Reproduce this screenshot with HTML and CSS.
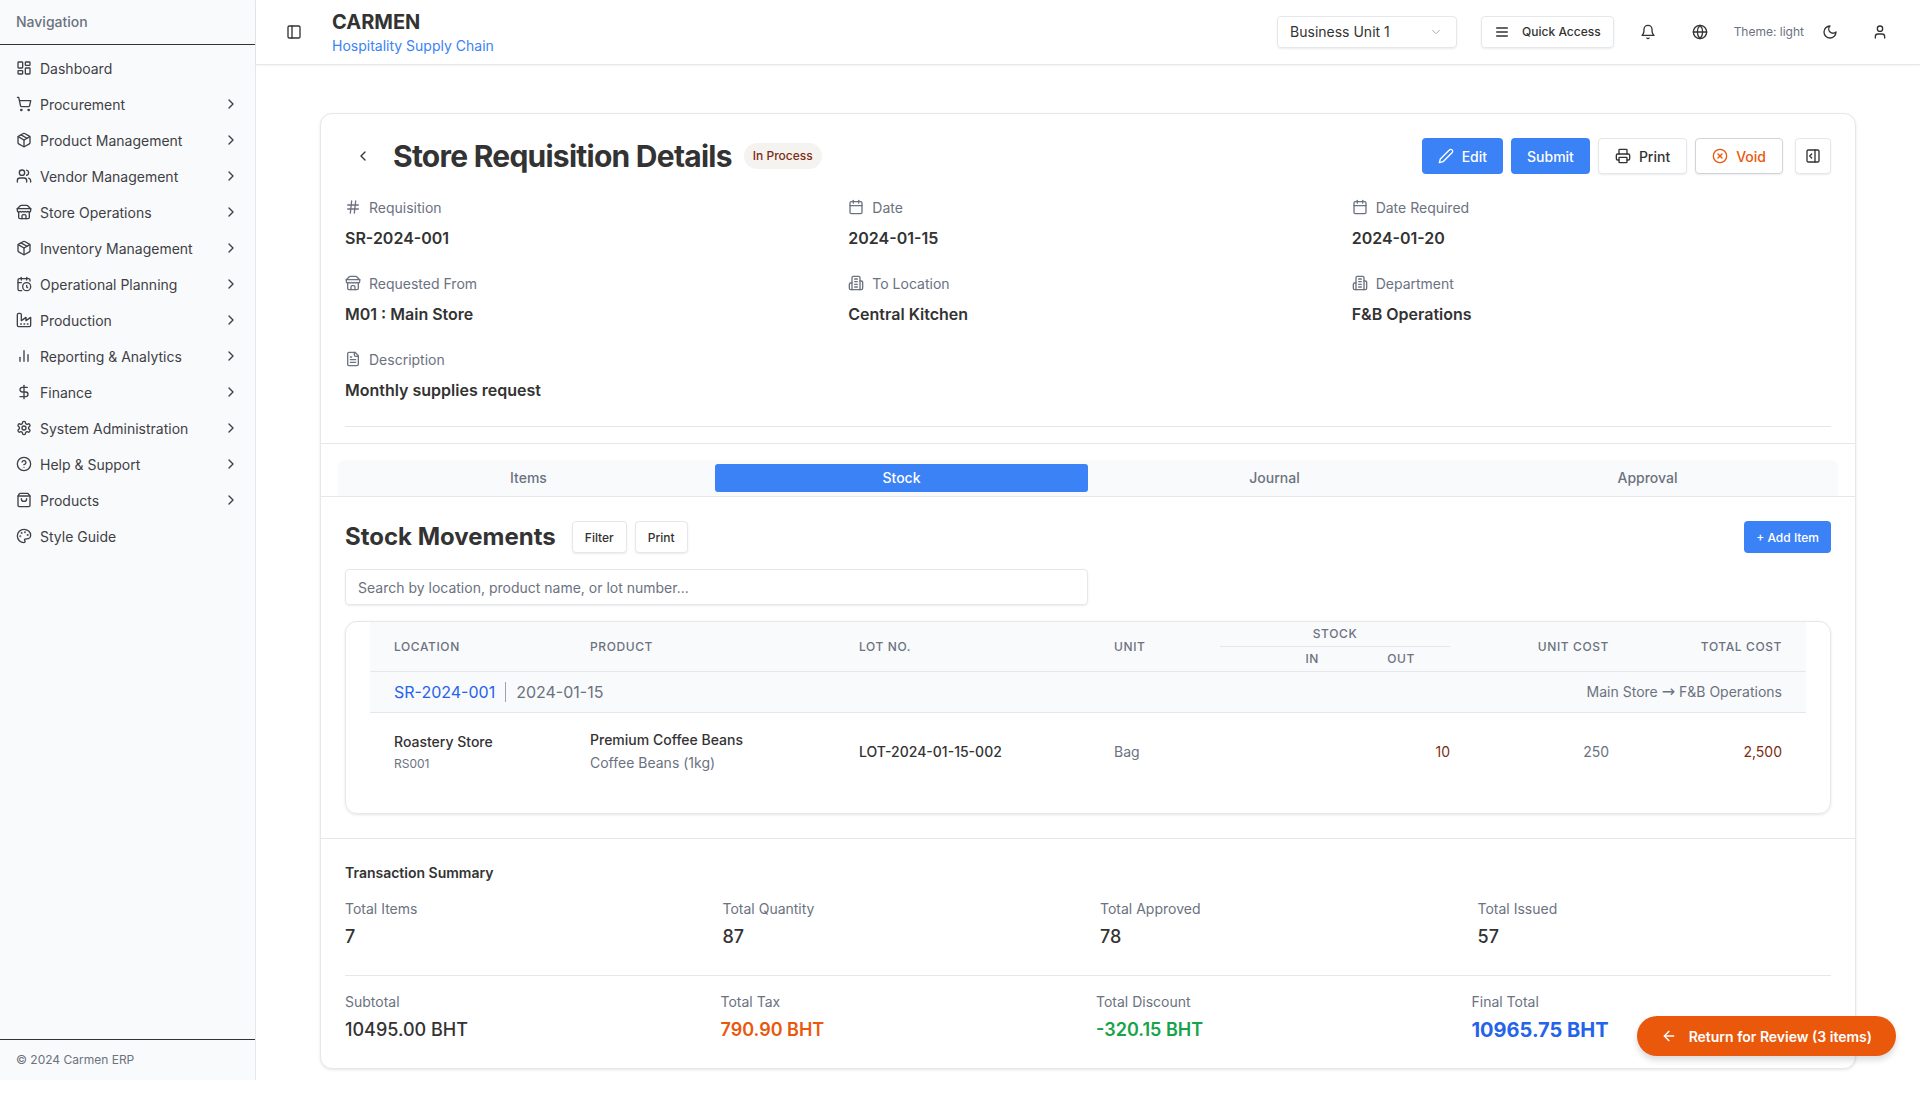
FILE: index.html
```html
<!DOCTYPE html>
<html lang="en">
<head>
    <meta charset="UTF-8">
    <title>Store Requisition Details</title>
    <link rel="stylesheet" href="styles.css">
</head>
<body>
    <svg class="sprite" xmlns="http://www.w3.org/2000/svg">
        <symbol id="i-chev" viewBox="0 0 24 24"><path d="m9 18 6-6-6-6"/></symbol>
        <symbol id="i-dash" viewBox="0 0 24 24"><rect width="7" height="9" x="3" y="3" rx="1"/><rect width="7" height="5" x="14" y="3" rx="1"/><rect width="7" height="9" x="14" y="12" rx="1"/><rect width="7" height="5" x="3" y="16" rx="1"/></symbol>
        <symbol id="i-cart" viewBox="0 0 24 24"><circle cx="8" cy="21" r="1"/><circle cx="19" cy="21" r="1"/><path d="M2.05 2.05h2l2.66 12.42a2 2 0 0 0 2 1.58h9.78a2 2 0 0 0 1.95-1.57l1.65-7.43H5.12"/></symbol>
        <symbol id="i-box" viewBox="0 0 24 24"><path d="m7.5 4.27 9 5.15"/><path d="M21 8a2 2 0 0 0-1-1.73l-7-4a2 2 0 0 0-2 0l-7 4A2 2 0 0 0 3 8v8a2 2 0 0 0 1 1.73l7 4a2 2 0 0 0 2 0l7-4A2 2 0 0 0 21 16Z"/><path d="m3.3 7 8.7 5 8.7-5"/><path d="M12 22V12"/></symbol>
        <symbol id="i-users" viewBox="0 0 24 24"><path d="M16 21v-2a4 4 0 0 0-4-4H6a4 4 0 0 0-4 4v2"/><circle cx="9" cy="7" r="4"/><path d="M22 21v-2a4 4 0 0 0-3-3.87"/><path d="M16 3.13a4 4 0 0 1 0 7.75"/></symbol>
        <symbol id="i-store" viewBox="0 0 24 24"><path d="m2 7 4.41-4.41A2 2 0 0 1 7.83 2h8.34a2 2 0 0 1 1.42.59L22 7"/><path d="M4 12v8a2 2 0 0 0 2 2h12a2 2 0 0 0 2-2v-8"/><path d="M15 22v-4a2 2 0 0 0-2-2h-2a2 2 0 0 0-2 2v4"/><path d="M2 7h20"/><path d="M22 7v3a2 2 0 0 1-2 2a2.7 2.7 0 0 1-1.59-.63.7.7 0 0 0-.82 0A2.7 2.7 0 0 1 16 12a2.7 2.7 0 0 1-1.59-.63.7.7 0 0 0-.82 0A2.7 2.7 0 0 1 12 12a2.7 2.7 0 0 1-1.59-.63.7.7 0 0 0-.82 0A2.7 2.7 0 0 1 8 12a2.7 2.7 0 0 1-1.59-.63.7.7 0 0 0-.82 0A2.7 2.7 0 0 1 4 12a2 2 0 0 1-2-2V7"/></symbol>
        <symbol id="i-calclock" viewBox="0 0 24 24"><path d="M21 7.5V6a2 2 0 0 0-2-2H5a2 2 0 0 0-2 2v14a2 2 0 0 0 2 2h3.5"/><path d="M16 2v4"/><path d="M8 2v4"/><path d="M3 10h5"/><path d="M17.5 17.5 16 16.3V14"/><circle cx="16" cy="16" r="6"/></symbol>
        <symbol id="i-factory" viewBox="0 0 24 24"><path d="M2 20a2 2 0 0 0 2 2h16a2 2 0 0 0 2-2V8l-7 5V8l-7 5V4a2 2 0 0 0-2-2H4a2 2 0 0 0-2 2Z"/><path d="M17 18h1"/><path d="M12 18h1"/><path d="M7 18h1"/></symbol>
        <symbol id="i-bars" viewBox="0 0 24 24"><line x1="18" x2="18" y1="20" y2="10"/><line x1="12" x2="12" y1="20" y2="4"/><line x1="6" x2="6" y1="20" y2="14"/></symbol>
        <symbol id="i-dollar" viewBox="0 0 24 24"><line x1="12" x2="12" y1="2" y2="22"/><path d="M17 5H9.5a3.5 3.5 0 0 0 0 7h5a3.5 3.5 0 0 1 0 7H6"/></symbol>
        <symbol id="i-gear" viewBox="0 0 24 24"><path d="M12.22 2h-.44a2 2 0 0 0-2 2v.18a2 2 0 0 1-1 1.73l-.43.25a2 2 0 0 1-2 0l-.15-.08a2 2 0 0 0-2.73.73l-.22.38a2 2 0 0 0 .73 2.73l.15.1a2 2 0 0 1 1 1.72v.51a2 2 0 0 1-1 1.74l-.15.09a2 2 0 0 0-.73 2.73l.22.38a2 2 0 0 0 2.73.73l.15-.08a2 2 0 0 1 2 0l.43.25a2 2 0 0 1 1 1.73V20a2 2 0 0 0 2 2h.44a2 2 0 0 0 2-2v-.18a2 2 0 0 1 1-1.73l.43-.25a2 2 0 0 1 2 0l.15.08a2 2 0 0 0 2.73-.73l.22-.39a2 2 0 0 0-.73-2.73l-.15-.08a2 2 0 0 1-1-1.74v-.5a2 2 0 0 1 1-1.74l.15-.09a2 2 0 0 0 .73-2.73l-.22-.38a2 2 0 0 0-2.73-.73l-.15.08a2 2 0 0 1-2 0l-.43-.25a2 2 0 0 1-1-1.73V4a2 2 0 0 0-2-2z"/><circle cx="12" cy="12" r="3"/></symbol>
        <symbol id="i-help" viewBox="0 0 24 24"><circle cx="12" cy="12" r="10"/><path d="M9.09 9a3 3 0 0 1 5.83 1c0 2-3 3-3 3"/><path d="M12 17h.01"/></symbol>
        <symbol id="i-bag" viewBox="0 0 24 24"><path d="M16 10a4 4 0 0 1-8 0"/><path d="M3.103 6.034h17.794"/><path d="M3.4 5.467a2 2 0 0 0-.4 1.2V20a2 2 0 0 0 2 2h14a2 2 0 0 0 2-2V6.667a2 2 0 0 0-.4-1.2l-1.5-2A2 2 0 0 0 17.5 2h-11a2 2 0 0 0-1.6.8z"/></symbol>
        <symbol id="i-palette" viewBox="0 0 24 24"><circle cx="13.5" cy="6.5" r=".5"/><circle cx="17.5" cy="10.5" r=".5"/><circle cx="8.5" cy="7.5" r=".5"/><circle cx="6.5" cy="12.5" r=".5"/><path d="M12 2C6.5 2 2 6.5 2 12s4.5 10 10 10c.926 0 1.648-.746 1.648-1.688 0-.437-.18-.835-.437-1.125-.29-.289-.438-.652-.438-1.125a1.64 1.64 0 0 1 1.668-1.668h1.996c3.051 0 5.555-2.503 5.555-5.554C21.965 6.012 17.461 2 12 2z"/></symbol>
        <symbol id="i-panel" viewBox="0 0 24 24"><rect width="18" height="18" x="3" y="3" rx="2"/><path d="M9 3v18"/></symbol>
        <symbol id="i-panelr" viewBox="0 0 24 24"><rect width="18" height="18" x="3" y="3" rx="2"/><path d="M15 3v18"/><path d="m10 15-3-3 3-3"/></symbol>
        <symbol id="i-chevd" viewBox="0 0 24 24"><path d="m6 9 6 6 6-6"/></symbol>
        <symbol id="i-back" viewBox="0 0 24 24"><path d="m15 18-6-6 6-6"/></symbol>
        <symbol id="i-menu" viewBox="0 0 24 24"><path d="M4 6h16"/><path d="M4 12h16"/><path d="M4 18h16"/></symbol>
        <symbol id="i-bell" viewBox="0 0 24 24"><path d="M6 8a6 6 0 0 1 12 0c0 7 3 9 3 9H3s3-2 3-9"/><path d="M10.3 21a1.94 1.94 0 0 0 3.4 0"/></symbol>
        <symbol id="i-globe" viewBox="0 0 24 24"><circle cx="12" cy="12" r="10"/><path d="M12 2a14.5 14.5 0 0 0 0 20 14.5 14.5 0 0 0 0-20"/><path d="M2 12h20"/></symbol>
        <symbol id="i-moon" viewBox="0 0 24 24"><path d="M12 3a6 6 0 0 0 9 9 9 9 0 1 1-9-9Z"/></symbol>
        <symbol id="i-user" viewBox="0 0 24 24"><path d="M19 21v-2a4 4 0 0 0-4-4H9a4 4 0 0 0-4 4v2"/><circle cx="12" cy="7" r="4"/></symbol>
        <symbol id="i-pen" viewBox="0 0 24 24"><path d="M17 3a2.85 2.83 0 1 1 4 4L7.5 20.5 2 22l1.5-5.5Z"/></symbol>
        <symbol id="i-print" viewBox="0 0 24 24"><path d="M6 18H4a2 2 0 0 1-2-2v-5a2 2 0 0 1 2-2h16a2 2 0 0 1 2 2v5a2 2 0 0 1-2 2h-2"/><path d="M6 9V3a1 1 0 0 1 1-1h10a1 1 0 0 1 1 1v6"/><rect x="6" y="14" width="12" height="8" rx="1"/></symbol>
        <symbol id="i-xcircle" viewBox="0 0 24 24"><circle cx="12" cy="12" r="10"/><path d="m15 9-6 6"/><path d="m9 9 6 6"/></symbol>
        <symbol id="i-hash" viewBox="0 0 24 24"><line x1="4" x2="20" y1="9" y2="9"/><line x1="4" x2="20" y1="15" y2="15"/><line x1="10" x2="8" y1="3" y2="21"/><line x1="16" x2="14" y1="3" y2="21"/></symbol>
        <symbol id="i-cal" viewBox="0 0 24 24"><path d="M8 2v4"/><path d="M16 2v4"/><rect width="18" height="18" x="3" y="4" rx="2"/><path d="M3 10h18"/></symbol>
        <symbol id="i-building" viewBox="0 0 24 24"><path d="M6 22V4a2 2 0 0 1 2-2h8a2 2 0 0 1 2 2v18Z"/><path d="M6 12H4a2 2 0 0 0-2 2v6a2 2 0 0 0 2 2h2"/><path d="M18 9h2a2 2 0 0 1 2 2v9a2 2 0 0 1-2 2h-2"/><path d="M10 6h4"/><path d="M10 10h4"/><path d="M10 14h4"/><path d="M10 18h4"/></symbol>
        <symbol id="i-file" viewBox="0 0 24 24"><path d="M15 2H6a2 2 0 0 0-2 2v16a2 2 0 0 0 2 2h12a2 2 0 0 0 2-2V7Z"/><path d="M14 2v4a2 2 0 0 0 2 2h4"/><path d="M10 9H8"/><path d="M16 13H8"/><path d="M16 17H8"/></symbol>
        <symbol id="i-arrow" viewBox="0 0 24 24"><path d="m12 19-7-7 7-7"/><path d="M19 12H5"/></symbol>
    </svg>

    <div class="app">
        <aside class="sidebar">
            <div class="sidebar-title">Navigation</div>
            <nav class="nav">
                <a class="nav-item"><svg class="icon"><use href="#i-dash"/></svg><span>Dashboard</span></a>
                <a class="nav-item"><svg class="icon"><use href="#i-cart"/></svg><span>Procurement</span><svg class="icon chev"><use href="#i-chev"/></svg></a>
                <a class="nav-item"><svg class="icon"><use href="#i-box"/></svg><span>Product Management</span><svg class="icon chev"><use href="#i-chev"/></svg></a>
                <a class="nav-item"><svg class="icon"><use href="#i-users"/></svg><span>Vendor Management</span><svg class="icon chev"><use href="#i-chev"/></svg></a>
                <a class="nav-item"><svg class="icon"><use href="#i-store"/></svg><span>Store Operations</span><svg class="icon chev"><use href="#i-chev"/></svg></a>
                <a class="nav-item"><svg class="icon"><use href="#i-box"/></svg><span>Inventory Management</span><svg class="icon chev"><use href="#i-chev"/></svg></a>
                <a class="nav-item"><svg class="icon"><use href="#i-calclock"/></svg><span>Operational Planning</span><svg class="icon chev"><use href="#i-chev"/></svg></a>
                <a class="nav-item"><svg class="icon"><use href="#i-factory"/></svg><span>Production</span><svg class="icon chev"><use href="#i-chev"/></svg></a>
                <a class="nav-item"><svg class="icon"><use href="#i-bars"/></svg><span>Reporting &amp; Analytics</span><svg class="icon chev"><use href="#i-chev"/></svg></a>
                <a class="nav-item"><svg class="icon"><use href="#i-dollar"/></svg><span>Finance</span><svg class="icon chev"><use href="#i-chev"/></svg></a>
                <a class="nav-item"><svg class="icon"><use href="#i-gear"/></svg><span>System Administration</span><svg class="icon chev"><use href="#i-chev"/></svg></a>
                <a class="nav-item"><svg class="icon"><use href="#i-help"/></svg><span>Help &amp; Support</span><svg class="icon chev"><use href="#i-chev"/></svg></a>
                <a class="nav-item"><svg class="icon"><use href="#i-bag"/></svg><span>Products</span><svg class="icon chev"><use href="#i-chev"/></svg></a>
                <a class="nav-item"><svg class="icon"><use href="#i-palette"/></svg><span>Style Guide</span></a>
            </nav>
            <div class="sidebar-footer">© 2024 Carmen ERP</div>
        </aside>

        <div class="content">
            <header class="topbar">
                <svg class="icon toggle"><use href="#i-panel"/></svg>
                <div class="brand">
                    <div class="brand-name">CARMEN</div>
                    <div class="brand-sub">Hospitality Supply Chain</div>
                </div>
                <div class="topbar-right">
                    <div class="select">Business Unit 1<svg class="icon select-chev"><use href="#i-chevd"/></svg></div>
                    <div class="quick"><svg class="icon"><use href="#i-menu"/></svg>Quick Access</div>
                    <svg class="icon bell"><use href="#i-bell"/></svg>
                    <svg class="icon globe"><use href="#i-globe"/></svg>
                    <span class="theme">Theme: light</span>
                    <svg class="icon moon"><use href="#i-moon"/></svg>
                    <svg class="icon person"><use href="#i-user"/></svg>
                </div>
            </header>

            <main class="main">
                <section class="card">
                    <div class="detail-head">
                        <div class="title-row">
                            <svg class="icon back"><use href="#i-back"/></svg>
                            <h1 class="page-title">Store Requisition Details</h1>
                            <span class="badge">In Process</span>
                            <div class="actions">
                                <button class="btn btn-primary"><svg class="icon"><use href="#i-pen"/></svg>Edit</button>
                                <button class="btn btn-primary">Submit</button>
                                <button class="btn btn-outline"><svg class="icon"><use href="#i-print"/></svg>Print</button>
                                <button class="btn btn-outline btn-void"><svg class="icon"><use href="#i-xcircle"/></svg>Void</button>
                                <button class="btn btn-outline btn-icon"><svg class="icon"><use href="#i-panelr"/></svg></button>
                            </div>
                        </div>
                        <div class="fields">
                            <div class="field"><div class="field-label"><svg class="icon"><use href="#i-hash"/></svg>Requisition</div><div class="field-value">SR-2024-001</div></div>
                            <div class="field"><div class="field-label"><svg class="icon"><use href="#i-cal"/></svg>Date</div><div class="field-value">2024-01-15</div></div>
                            <div class="field"><div class="field-label"><svg class="icon"><use href="#i-cal"/></svg>Date Required</div><div class="field-value">2024-01-20</div></div>
                            <div class="field"><div class="field-label"><svg class="icon"><use href="#i-store"/></svg>Requested From</div><div class="field-value">M01 : Main Store</div></div>
                            <div class="field"><div class="field-label"><svg class="icon"><use href="#i-building"/></svg>To Location</div><div class="field-value">Central Kitchen</div></div>
                            <div class="field"><div class="field-label"><svg class="icon"><use href="#i-building"/></svg>Department</div><div class="field-value">F&amp;B Operations</div></div>
                            <div class="field"><div class="field-label"><svg class="icon"><use href="#i-file"/></svg>Description</div><div class="field-value">Monthly supplies request</div></div>
                        </div>
                        <div class="head-rule"></div>
                    </div>

                    <div class="tabs-wrap">
                        <div class="tabs">
                            <div class="tab">Items</div>
                            <div class="tab active">Stock</div>
                            <div class="tab">Journal</div>
                            <div class="tab">Approval</div>
                        </div>
                    </div>

                    <div class="stock">
                        <div class="stock-head">
                            <h2 class="stock-title">Stock Movements</h2>
                            <button class="btn-sm">Filter</button>
                            <button class="btn-sm">Print</button>
                            <button class="btn-sm btn-add">+ Add Item</button>
                        </div>
                        <div class="search">Search by location, product name, or lot number...</div>
                        <div class="table-card">
                            <table class="stock-table">
                                <colgroup>
                                    <col class="c-loc"><col class="c-prod"><col class="c-lot"><col class="c-unit"><col class="c-in"><col class="c-out"><col class="c-ucost"><col class="c-tcost">
                                </colgroup>
                                <thead>
                                    <tr>
                                        <th rowspan="2">Location</th>
                                        <th rowspan="2">Product</th>
                                        <th rowspan="2">Lot No.</th>
                                        <th rowspan="2">Unit</th>
                                        <th colspan="2" class="th-stock"><span>Stock</span></th>
                                        <th rowspan="2" class="num">Unit Cost</th>
                                        <th rowspan="2" class="num">Total Cost</th>
                                    </tr>
                                    <tr>
                                        <th class="th-in">In</th>
                                        <th class="th-out">Out</th>
                                    </tr>
                                </thead>
                                <tbody>
                                    <tr class="group-row">
                                        <td colspan="8">
                                            <div class="group">
                                                <a class="group-ref">SR-2024-001</a>
                                                <span class="group-sep"></span>
                                                <span class="group-date">2024-01-15</span>
                                                <span class="group-route">Main Store <span class="route-arrow">→</span> F&amp;B Operations</span>
                                            </div>
                                        </td>
                                    </tr>
                                    <tr class="item-row">
                                        <td><div class="strong">Roastery Store</div><div class="small">RS001</div></td>
                                        <td><div class="strong">Premium Coffee Beans</div><div class="muted sub">Coffee Beans (1kg)</div></td>
                                        <td class="strong">LOT-2024-01-15-002</td>
                                        <td class="muted">Bag</td>
                                        <td></td>
                                        <td class="qty out">10</td>
                                        <td class="num muted">250</td>
                                        <td class="num out">2,500</td>
                                    </tr>
                                </tbody>
                            </table>
                        </div>
                    </div>

                    <div class="summary">
                        <h3 class="summary-title">Transaction Summary</h3>
                        <div class="sum-row">
                            <div><div class="sum-label">Total Items</div><div class="sum-value">7</div></div>
                            <div><div class="sum-label">Total Quantity</div><div class="sum-value">87</div></div>
                            <div><div class="sum-label">Total Approved</div><div class="sum-value">78</div></div>
                            <div><div class="sum-label">Total Issued</div><div class="sum-value">57</div></div>
                        </div>
                        <div class="sum-row totals">
                            <div><div class="sum-label">Subtotal</div><div class="sum-value">10495.00 BHT</div></div>
                            <div><div class="sum-label">Total Tax</div><div class="sum-value tax">790.90 BHT</div></div>
                            <div><div class="sum-label">Total Discount</div><div class="sum-value discount">-320.15 BHT</div></div>
                            <div><div class="sum-label">Final Total</div><div class="sum-value final">10965.75 BHT</div></div>
                        </div>
                    </div>
                </section>
            </main>
        </div>

        <button class="return-btn"><svg class="icon"><use href="#i-arrow"/></svg>Return for Review (3 items)</button>
    </div>
</body>
</html>
```

FILE: styles.css
```css
* {
    margin: 0;
    padding: 0;
    box-sizing: border-box;
}

body {
    font-family: Inter, "Noto Sans", sans-serif;
    font-size: 14px;
    color: #333;
    background: #fff;
}

.sprite {
    display: none;
}

.icon {
    width: 16px;
    height: 16px;
    flex: none;
    fill: none;
    stroke: currentColor;
    stroke-width: 2;
    stroke-linecap: round;
    stroke-linejoin: round;
}

.app {
    position: relative;
    display: flex;
    height: 1080px;
    overflow: hidden;
}

/* sidebar */
.sidebar {
    width: 256px;
    flex: none;
    display: flex;
    flex-direction: column;
    background: #f9fafb;
    border-right: 1px solid #e5e7eb;
}

.sidebar-title {
    height: 45px;
    padding: 13px 16px 0;
    font-weight: 500;
    line-height: 17px;
    color: #6b7280;
    border-bottom: 1px solid #333;
}

.nav {
    flex: 1;
    padding-top: 5px;
}

.nav-item {
    display: flex;
    align-items: center;
    gap: 8px;
    height: 36px;
    padding: 0 16px;
    color: #3f3f46;
}

.nav-item span {
    flex: 1;
}

.sidebar-footer {
    height: 41px;
    padding: 12px 16px 0;
    font-size: 12px;
    color: #6b7280;
    border-top: 1px solid #333;
}

/* top bar */
.content {
    flex: 1;
    min-width: 0;
}

.topbar {
    display: flex;
    align-items: center;
    height: 65px;
    padding: 0 32px 1px 30px;
    border-bottom: 1px solid #e5e7eb;
    box-shadow: 0 1px 2px rgba(0, 0, 0, 0.05);
}

.toggle {
    margin-right: 30px;
}

.brand-name {
    font-size: 20px;
    font-weight: 700;
    line-height: 28px;
}

.brand-sub {
    font-size: 14px;
    line-height: 20px;
    color: #3b82f6;
}

.topbar-right {
    display: flex;
    align-items: center;
    margin-left: auto;
}

.select {
    display: flex;
    align-items: center;
    justify-content: space-between;
    width: 180px;
    height: 32px;
    padding: 0 13px 0 12px;
    font-size: 14px;
    border: 1px solid #e5e7eb;
    border-radius: 4px;
    box-shadow: 0 1px 2px rgba(0, 0, 0, 0.08);
}

.select-chev {
    width: 14px;
    height: 14px;
    color: #9ca3af;
    stroke-width: 1.5;
}

.quick {
    display: flex;
    align-items: center;
    gap: 12px;
    height: 32px;
    margin-left: 24px;
    padding: 0 12px;
    font-size: 12px;
    font-weight: 500;
    border: 1px solid #e5e7eb;
    border-radius: 4px;
    box-shadow: 0 1px 2px rgba(0, 0, 0, 0.08);
}

.bell {
    margin-left: 26px;
}

.globe {
    margin-left: 36px;
}

.theme {
    margin-left: 26px;
    font-size: 12px;
    color: #6b7280;
}

.moon {
    margin-left: 18px;
}

.person {
    margin-left: 34px;
}

/* card */
.main {
    padding: 48px 64px 0;
}

.card {
    border: 1px solid #e5e7eb;
    border-radius: 12px;
    box-shadow: 0 1px 3px rgba(0, 0, 0, 0.1);
    background: #fff;
}

.detail-head {
    padding: 24px 24px 16px;
}

.title-row {
    display: flex;
    align-items: center;
    height: 36px;
}

.back {
    margin-left: 10px;
    margin-right: 22px;
}

.page-title {
    font-size: 30px;
    font-weight: 700;
    line-height: 36px;
    letter-spacing: -0.75px;
}

.badge {
    margin-left: 12px;
    padding: 0 9px;
    font-size: 12px;
    font-weight: 500;
    line-height: 26px;
    color: #7c2d12;
    background: #f5f3f0;
    border-radius: 13px;
}

.actions {
    display: flex;
    gap: 8px;
    margin-left: auto;
}

.btn {
    display: flex;
    align-items: center;
    justify-content: center;
    gap: 8px;
    height: 36px;
    font-family: inherit;
    font-size: 14px;
    font-weight: 500;
    border-radius: 4px;
    cursor: pointer;
}

.btn-primary {
    padding: 0 16px;
    color: #fff;
    background: #3b82f6;
    border: none;
}

.btn-outline {
    padding: 0 16px;
    color: #333;
    background: #fff;
    border: 1px solid #e5e7eb;
    box-shadow: 0 1px 2px rgba(0, 0, 0, 0.08);
}

.btn-void {
    color: #ea580c;
    border-color: #d1d5db;
}

.btn-icon {
    width: 36px;
    padding: 0;
    margin-left: 4px;
}

.fields {
    display: grid;
    grid-template-columns: repeat(3, 1fr);
    column-gap: 24px;
    row-gap: 23px;
    margin-top: 23px;
}

.field-label {
    display: flex;
    align-items: center;
    gap: 8px;
    height: 20px;
    color: #6b7280;
}

.field-value {
    margin-top: 9px;
    font-size: 16px;
    font-weight: 600;
    line-height: 24px;
}

.head-rule {
    margin-top: 24px;
    border-top: 1px solid #e5e7eb;
}

/* tabs */
.tabs-wrap {
    padding: 16px 17px 0;
    border-top: 1px solid #e5e7eb;
    border-bottom: 1px solid #e5e7eb;
}

.tabs {
    display: grid;
    grid-template-columns: repeat(4, 1fr);
    height: 36px;
    padding: 4px;
    background: #f9fafb;
    border-radius: 6px 6px 0 0;
}

.tab {
    display: flex;
    align-items: center;
    justify-content: center;
    padding-bottom: 1px;
    font-weight: 500;
    color: #6b7280;
    border-radius: 3px;
}

.tab.active {
    color: #fff;
    background: #3b82f6;
}

/* stock */
.stock {
    padding: 24px;
    border-bottom: 1px solid #e5e7eb;
}

.stock-head {
    display: flex;
    align-items: center;
    gap: 8px;
    height: 32px;
}

.stock-title {
    margin-right: 8px;
    font-size: 24px;
    font-weight: 700;
    line-height: 32px;
}

.btn-sm {
    height: 32px;
    padding: 0 12px;
    font-family: inherit;
    font-size: 12px;
    font-weight: 500;
    color: #333;
    background: #fff;
    border: 1px solid #e5e7eb;
    border-radius: 4px;
    box-shadow: 0 1px 2px rgba(0, 0, 0, 0.08);
}

.btn-add {
    margin-left: auto;
    color: #fff;
    background: #3b82f6;
    border: none;
    box-shadow: none;
}

.search {
    width: 743px;
    height: 36px;
    margin-top: 16px;
    padding: 0 12px;
    line-height: 35px;
    color: #6b7280;
    border: 1px solid #e5e7eb;
    border-radius: 4px;
    box-shadow: 0 1px 2px rgba(0, 0, 0, 0.08);
}

.table-card {
    height: 193px;
    margin-top: 16px;
    padding: 0 24px;
    border: 1px solid #e5e7eb;
    border-radius: 12px;
    box-shadow: 0 1px 3px rgba(0, 0, 0, 0.1);
}

.stock-table {
    width: 100%;
    table-layout: fixed;
    border-collapse: collapse;
}

.c-loc { width: 196px; }
.c-prod { width: 269px; }
.c-lot { width: 255px; }
.c-unit { width: 130px; }
.c-in { width: 114px; }
.c-out { width: 116px; }
.c-ucost { width: 183px; }
.c-tcost { width: 173px; }

.stock-table th {
    padding: 0 24px;
    font-size: 12px;
    font-weight: 500;
    letter-spacing: 0.6px;
    text-align: left;
    text-transform: uppercase;
    color: #6b7280;
    background: #f9fafb;
}

.stock-table thead tr:first-child th {
    height: 24px;
}

.stock-table thead tr:last-child th {
    height: 25px;
    border-bottom: 1px solid #e5e7eb;
}

.stock-table th[rowspan] {
    border-bottom: 1px solid #e5e7eb;
}

.stock-table .th-stock {
    padding: 0;
    text-align: center;
    border-bottom: 1px solid #e5e7eb;
}

.stock-table .th-in {
    padding: 0 15px 0 0;
    text-align: right;
}

.stock-table .th-out {
    padding: 0 35px 0 0;
    text-align: right;
}

.stock-table .num {
    text-align: right;
}

.group-row td {
    height: 41px;
    padding: 0 24px;
    background: #f9fafb;
    border-bottom: 1px solid #e5e7eb;
}

.group {
    display: flex;
    align-items: center;
}

.group-ref {
    font-size: 16px;
    color: #2563eb;
}

.group-sep {
    width: 1px;
    height: 20px;
    margin: 0 10px;
    background: #9ca3af;
}

.group-date {
    font-size: 16px;
    color: #6b7280;
}

.group-route {
    margin-left: auto;
    color: #6b7280;
}

.route-arrow {
    font-family: "DejaVu Sans", sans-serif;
    font-size: 16px;
    line-height: 16px;
}

.item-row td {
    height: 79px;
    padding: 0 24px;
}

.item-row .qty {
    padding-right: 0;
    text-align: right;
}

.strong {
    font-weight: 500;
    line-height: 20px;
}

.small {
    margin-top: 4px;
    font-size: 12px;
    line-height: 16px;
    color: #6b7280;
}

.muted {
    color: #6b7280;
}

.sub {
    margin-top: 3px;
    line-height: 20px;
}

.out {
    color: #7c2d12;
}

/* summary */
.summary {
    padding: 24px;
}

.summary-title {
    font-size: 14px;
    font-weight: 600;
    line-height: 20px;
}

.sum-row {
    display: grid;
    grid-template-columns: repeat(4, 1fr);
    column-gap: 24px;
    margin-top: 16px;
}

.sum-row.totals {
    column-gap: 16px;
    margin-top: 24px;
    padding-top: 16px;
    border-top: 1px solid #e5e7eb;
}

.sum-label {
    line-height: 20px;
    color: #6b7280;
}

.sum-value {
    margin-top: 4px;
    font-size: 18px;
    font-weight: 500;
    line-height: 28px;
}

.tax {
    font-weight: 600;
    color: #ea580c;
}

.discount {
    font-weight: 600;
    color: #16a34a;
}

.final {
    font-size: 20px;
    font-weight: 700;
    color: #2563eb;
}

/* floating button */
.return-btn {
    position: absolute;
    right: 24px;
    bottom: 24px;
    display: flex;
    align-items: center;
    gap: 12px;
    height: 40px;
    padding: 0 24px;
    font-family: inherit;
    font-size: 14px;
    font-weight: 600;
    color: #fff;
    background: #ea580c;
    border: none;
    border-radius: 20px;
    box-shadow: 0 4px 6px rgba(0, 0, 0, 0.15);
}
```
